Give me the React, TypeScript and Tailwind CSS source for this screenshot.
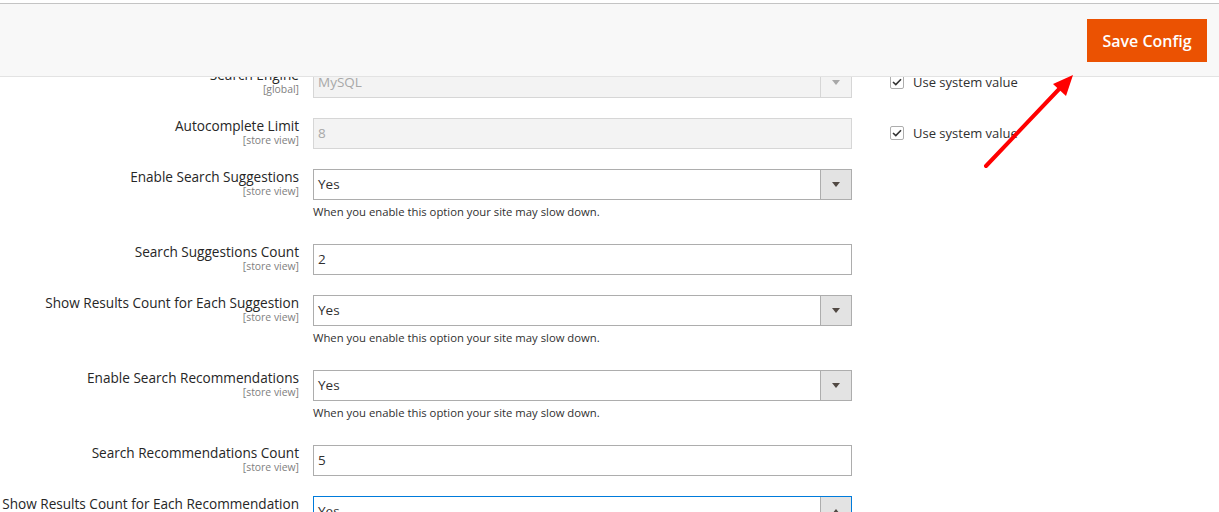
import React from "react";

type Row = {
  label: string;
  scope: string;
  kind: "select" | "input";
  value: string;
  disabled?: boolean;
  note?: boolean;
  system?: boolean;
  focused?: boolean;
};

const rows: Row[] = [
  { label: "Search Engine", scope: "[global]", kind: "select", value: "MySQL", disabled: true, system: true },
  { label: "Autocomplete Limit", scope: "[store view]", kind: "input", value: "8", disabled: true, system: true },
  { label: "Enable Search Suggestions", scope: "[store view]", kind: "select", value: "Yes", note: true },
  { label: "Search Suggestions Count", scope: "[store view]", kind: "input", value: "2" },
  { label: "Show Results Count for Each Suggestion", scope: "[store view]", kind: "select", value: "Yes", note: true },
  { label: "Enable Search Recommendations", scope: "[store view]", kind: "select", value: "Yes", note: true },
  { label: "Search Recommendations Count", scope: "[store view]", kind: "input", value: "5" },
  { label: "Show Results Count for Each Recommendation", scope: "[store view]", kind: "select", value: "Yes", focused: true },
];

function Control({ row }: { row: Row }) {
  const border = row.focused
    ? "border-[#007bdb]"
    : row.disabled
    ? "border-[#d6d6d6]"
    : "border-[#adadad]";
  const bg = row.disabled ? "bg-[#f3f3f3]" : "bg-white";
  const text = row.disabled ? "text-[#a8a8a8]" : "text-[#303030]";
  return (
    <div className={`flex h-[31px] w-[539px] border ${border} ${bg}`}>
      <div className={`flex-1 flex items-center pl-[4px] text-[13.5px] ${text}`}>{row.value}</div>
      {row.kind === "select" && (
        <div
          className={`w-[31px] h-full flex items-center justify-center border-l ${
            row.disabled ? "border-[#d6d6d6] bg-[#f3f3f3]" : "border-[#adadad] bg-[#e3e3e3]"
          }`}
        >
          <svg width="8" height="5" viewBox="0 0 8 5">
            {row.focused ? (
              <polygon points="0,5 8,5 4,0" fill="#514943" />
            ) : (
              <polygon points="0,0 8,0 4,5" fill={row.disabled ? "#a8a8a8" : "#514943"} />
            )}
          </svg>
        </div>
      )}
    </div>
  );
}

function Checkbox() {
  return (
    <div className="flex items-center gap-[9px] mt-[7px]">
      <div className="w-[14px] h-[14px] border border-[#adadad] rounded-[2px] bg-white flex items-center justify-center">
        <svg width="10" height="8" viewBox="0 0 10 8">
          <path d="M1 4 L3.8 6.6 L9 1.2" stroke="#333" strokeWidth="1.6" fill="none" />
        </svg>
      </div>
      <span className="text-[13px] text-[#303030] leading-[16px]">Use system value</span>
    </div>
  );
}

export default function App() {
  return (
    <div className="relative w-[1219px] h-[512px] overflow-hidden bg-white font-['Open_Sans',sans-serif]">
      <div className="pt-[67px] flex flex-col gap-[20px]">
        {rows.map((r) => (
          <div key={r.label} className="flex items-start">
            <div className="w-[299px] shrink-0 text-right">
              <div className="text-[13.6px] leading-[16px] text-[#262626] whitespace-nowrap">{r.label}</div>
              <div className="text-[10.4px] leading-[13px] text-[#808080]">{r.scope}</div>
            </div>
            <div className="ml-[14px] shrink-0">
              <Control row={r} />
              {r.note && (
                <div className="mt-[2px] pb-[2px] text-[11.3px] leading-[20px] text-[#303030]">
                  When you enable this option your site may slow down.
                </div>
              )}
            </div>
            {r.system && (
              <div className="ml-[38px]">
                <Checkbox />
              </div>
            )}
          </div>
        ))}
      </div>

      <div className="absolute left-0 right-0 top-[3px] h-[74px] bg-[#f8f8f8] border-t border-[#c4c4c4] border-b border-b-[#e3e3e3] flex items-start justify-end pr-[12px]">
        <button className="mt-[15px] w-[120px] h-[43px] bg-[#eb5202] text-white text-[16px] font-semibold flex items-center justify-center">
          Save Config
        </button>
      </div>

      <svg className="absolute left-0 top-0 pointer-events-none" width="1219" height="512">
        <line x1="986" y1="166" x2="1062" y2="86" stroke="#ff0000" strokeWidth="4" strokeLinecap="round" />
        <polygon points="1073,75 1053,84 1066,96" fill="#ff0000" />
      </svg>
    </div>
  );
}
